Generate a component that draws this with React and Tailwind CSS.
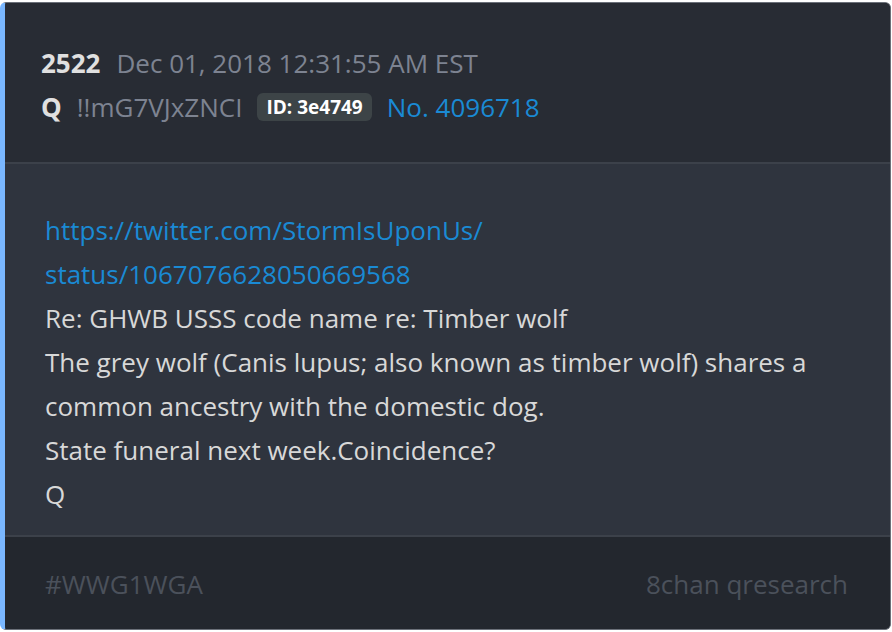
export default function App() {
  const font = { fontFamily: '"Open Sans", "Noto Sans", sans-serif' };
  return (
    <div className="w-[892px] h-[632px] bg-white pt-[2px] pr-[1px] pb-[2px]" style={font}>
      <div className="h-full flex flex-col rounded-md overflow-hidden border border-[#6b7079] border-l-[5px] border-l-[#7ab7ff] bg-[#282c34]">
        <div className="h-[161px] shrink-0 bg-[#282c34] px-[36px] pt-[43px] border-b-2 border-[#3c414a]">
          <div className="flex items-baseline gap-[16px] leading-[34px]">
            <span className="text-[26px] font-bold text-[#e0e0e0]">2522</span>
            <span className="text-[26px] text-[#7d8391]">Dec 01, 2018 12:31:55 AM EST</span>
          </div>
          <div className="flex items-center mt-[10px] leading-[34px]">
            <span className="text-[26px] font-bold text-[#e0e0e0]">Q</span>
            <span className="text-[26px] text-[#7d8391] ml-[15px]">!!mG7VJxZNCI</span>
            <span className="ml-[15px] bg-[#3d4447] rounded-md px-[9px] h-[28px] flex items-center text-[19px] font-bold text-white">ID: 3e4749</span>
            <span className="ml-[15px] text-[26px] text-[#1a8ad4]">No. 4096718</span>
          </div>
        </div>
        <div className="h-[373px] shrink-0 bg-[#2f343e] px-[40px] pt-[44px] border-b-2 border-[#3c414a] text-[26px] leading-[44px] text-[#d8d8d8]">
          <div className="text-[#1a8ad4]">https://twitter.com/StormIsUponUs/</div>
          <div className="text-[#1a8ad4]">status/1067076628050669568</div>
          <div>Re: GHWB USSS code name re: Timber wolf</div>
          <div>The grey wolf (Canis lupus; also known as timber wolf) shares a</div>
          <div>common ancestry with the domestic dog.</div>
          <div>State funeral next week.Coincidence?</div>
          <div>Q</div>
        </div>
        <div className="flex-1 bg-[#23272e] pl-[40px] pr-[42px] pt-[2px] flex items-center justify-between text-[26px] text-[#4b515b]">
          <span>#WWG1WGA</span>
          <span>8chan qresearch</span>
        </div>
      </div>
    </div>
  );
}
